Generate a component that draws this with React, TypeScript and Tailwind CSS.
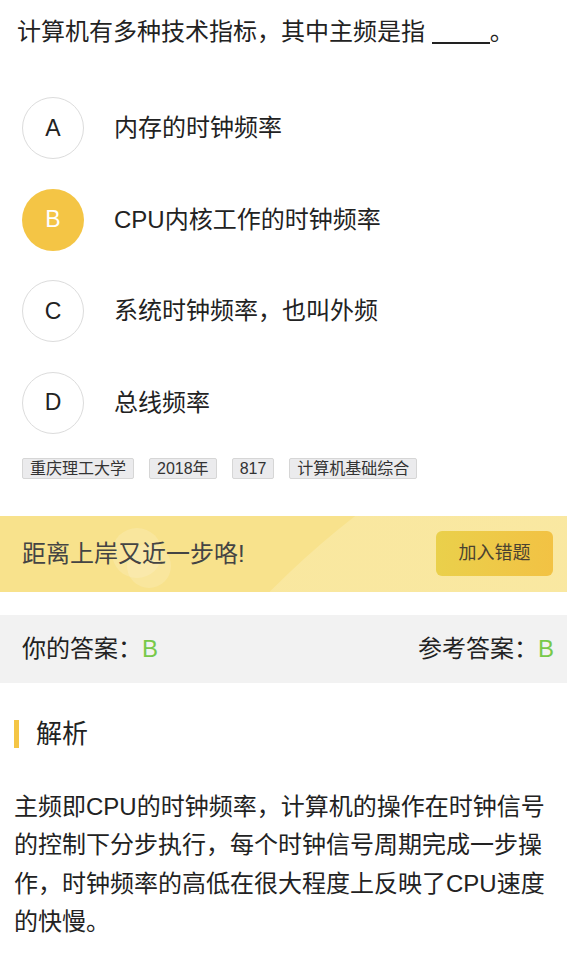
const font = 'font-["Liberation_Sans","Noto_Sans_CJK_SC",sans-serif]';

const options = [
  { key: "A", text: "内存的时钟频率" },
  { key: "B", text: "CPU内核工作的时钟频率", selected: true },
  { key: "C", text: "系统时钟频率，也叫外频" },
  { key: "D", text: "总线频率" },
];

const tags = ["重庆理工大学", "2018年", "817", "计算机基础综合"];

export default function App() {
  return (
    <div className={`${font} w-[567px] min-h-[954px] bg-white text-[#222]`}>
      {/* question */}
      <div className="px-[17px] pt-[14px] text-[24px] leading-[36px]">
        计算机有多种技术指标，其中主频是指{" "}
        <span className="inline-block w-[58px] border-b-2 border-[#222] align-[-4px]" />。
      </div>

      {/* options */}
      <div className="mt-[47px] flex flex-col gap-[29.5px] px-[22px]">
        {options.map((o) => (
          <div key={o.key} className="flex items-center">
            <div
              className={
                o.selected
                  ? "flex h-[62px] w-[62px] shrink-0 items-center justify-center rounded-full bg-[#f4c545] text-[23px] text-white"
                  : "flex h-[62px] w-[62px] shrink-0 items-center justify-center rounded-full border border-[#dcdcdc] text-[23px] text-[#222]"
              }
            >
              {o.key}
            </div>
            <span className="ml-[30px] text-[24px] leading-[32px]">{o.text}</span>
          </div>
        ))}
      </div>

      {/* tags */}
      <div className="mt-[24px] flex gap-[15px] px-[22px]">
        {tags.map((t) => (
          <span
            key={t}
            className="rounded-[2px] border border-[#d6d6d6] bg-[#ebebed] px-[7px] text-[16px] leading-[19px] text-[#333]"
          >
            {t}
          </span>
        ))}
      </div>

      {/* banner */}
      <div className="relative mt-[37px] flex h-[76px] items-center justify-between overflow-hidden bg-[#f8e28c] pl-[22px] pr-[14px]">
        <div className="absolute left-[13px] top-[-187px] h-[1774px] w-[1774px] rounded-full bg-gradient-to-r from-[#f9e79e] to-[#faeaa8]" />
        <div className="absolute left-[112px] top-[12px] h-[50px] w-[50px] rounded-full bg-white/15" />
        <div className="absolute left-[127px] top-[28px] h-[44px] w-[44px] rounded-full bg-white/15" />
        <span className="relative text-[24px] text-[#444]">距离上岸又近一步咯!</span>
        <button className="relative flex h-[45px] w-[117px] items-center justify-center rounded-[6px] bg-gradient-to-r from-[#ead04b] to-[#f2c244] text-[18px] text-[#4a4230]">
          加入错题
        </button>
      </div>

      {/* answers */}
      <div className="mt-[23px] flex h-[68px] items-center justify-between bg-[#f2f2f2] px-[22px] pr-[13px] text-[24px] text-[#222]">
        <span>
          你的答案：<span className="text-[#78c94a]">B</span>
        </span>
        <span>
          参考答案：<span className="text-[#78c94a]">B</span>
        </span>
      </div>

      {/* analysis */}
      <div className="mt-[37px] flex items-center px-[14px]">
        <div className="h-[28px] w-[5px] bg-[#f4c545]" />
        <span className="ml-[17px] text-[26px] leading-[28px]">解析</span>
      </div>
      <p className="mt-[40px] px-[14px] pb-[14px] text-[24px] leading-[38.5px] text-[#222]">
        主频即CPU的时钟频率，计算机的操作在时钟信号的控制下分步执行，每个时钟信号周期完成一步操作，时钟频率的高低在很大程度上反映了CPU速度的快慢。
      </p>
    </div>
  );
}
